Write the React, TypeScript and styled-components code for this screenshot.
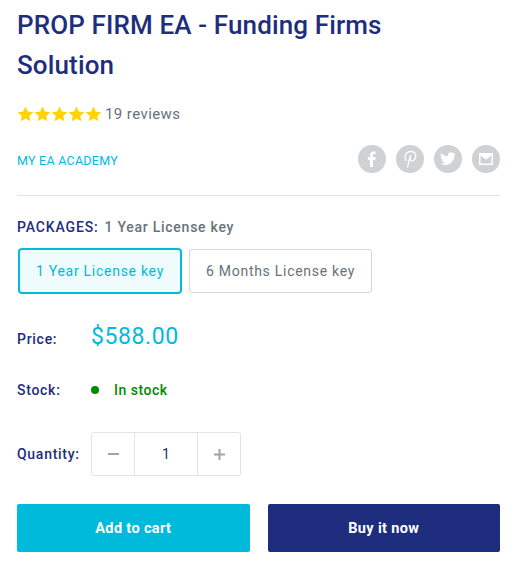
import React from "react";
import styled, { createGlobalStyle } from "styled-components";

const Global = createGlobalStyle`
  html, body { margin: 0; padding: 0; background: #fff; }
  body { font-family: Roboto, "Liberation Sans", sans-serif; overflow: hidden; }
  * { box-sizing: border-box; }
`;

const Page = styled.div`
  width: 522px;
  height: 571px;
  padding: 0 22px 0 17px;
  overflow: hidden;
`;

const Title = styled.h1`
  margin: 0;
  padding-top: 5px;
  max-width: 420px;
  font-size: 26px;
  line-height: 40px;
  font-weight: 500;
  letter-spacing: 0.13px;
  color: #1e2d7d;
`;

const Rating = styled.div`
  display: flex;
  align-items: center;
  gap: 3px;
  height: 24px;
  margin-top: 17px;
`;

const Stars = styled.div`
  display: flex;
  gap: 0;
`;

const Reviews = styled.span`
  font-size: 15px;
  letter-spacing: 0.42px;
  color: #677279;
`;

const VendorRow = styled.div`
  display: flex;
  justify-content: space-between;
  align-items: center;
  height: 28px;
  margin-top: 19px;
`;

const Vendor = styled.span`
  margin-top: 2px;
  font-size: 12.5px;
  letter-spacing: 0.25px;
  color: #00badb;
`;

const Share = styled.div`
  display: flex;
  gap: 10px;
`;

const ShareButton = styled.span`
  width: 28px;
  height: 28px;
  border-radius: 50%;
  background: #ced2d5;
  display: flex;
  align-items: center;
  justify-content: center;
`;

const Divider = styled.hr`
  margin: 22px 0 0;
  border: 0;
  height: 1px;
  background: #e1e3e4;
`;

const PackageLabel = styled.div`
  margin-top: 21px;
  height: 20px;
  display: flex;
  align-items: center;
  gap: 6px;
  font-size: 14px;
  font-weight: 500;
`;

const LabelName = styled.span`
  letter-spacing: 0.85px;
  color: #1e2d7d;
`;

const LabelValue = styled.span`
  letter-spacing: 0.74px;
  color: #677279;
`;

const Options = styled.div`
  display: flex;
  gap: 8px;
  margin-top: 12px;
  padding-left: 2px;
`;

const Option = styled.div<{ $active?: boolean }>`
  height: 44px;
  padding: 0 16px;
  display: flex;
  align-items: center;
  font-size: 14px;
  letter-spacing: 0.72px;
  border-radius: 3px;
  color: ${(p) => (p.$active ? "#00badb" : "#677279")};
  background: ${(p) => (p.$active ? "#f0fbfd" : "#fff")};
  border: 1px solid ${(p) => (p.$active ? "#00badb" : "#d4d6d8")};
  box-shadow: ${(p) => (p.$active ? "0 0 0 1px #00badb" : "none")};
`;

const InfoRow = styled.div<{ $top: number; $height: number }>`
  display: grid;
  grid-template-columns: 74px 1fr;
  align-items: center;
  margin-top: ${(p) => p.$top}px;
  height: ${(p) => p.$height}px;
`;

const InfoLabel = styled.span`
  font-size: 14px;
  font-weight: 500;
  letter-spacing: 0.72px;
  color: #1e2d7d;
`;

const Price = styled.span`
  font-size: 23px;
  letter-spacing: 0.6px;
  color: #00badb;
  position: relative;
  top: -3px;
`;

const StockLine = styled.span`
  display: flex;
  align-items: center;
  gap: 15px;
  font-size: 14px;
  font-weight: 500;
  letter-spacing: 0.5px;
  color: #008a00;
`;

const Dot = styled.i`
  width: 8px;
  height: 8px;
  border-radius: 50%;
  background: #008a00;
`;

const QtyBox = styled.div`
  display: flex;
  width: 150px;
  height: 44px;
  border: 1px solid #e1e3e4;
  border-radius: 3px;
`;

const QtyButton = styled.span`
  width: 42px;
  display: flex;
  align-items: center;
  justify-content: center;
`;

const QtyValue = styled.span`
  flex: 1;
  display: flex;
  align-items: center;
  justify-content: center;
  font-size: 14px;
  color: #1e2d7d;
  border-left: 1px solid #e1e3e4;
  border-right: 1px solid #e1e3e4;
`;

const Actions = styled.div`
  display: flex;
  gap: 18px;
  margin-top: 28px;
`;

const ActionButton = styled.button<{ $color: string }>`
  flex: 1;
  height: 48px;
  border: 0;
  border-radius: 2px;
  background: ${(p) => p.$color};
  color: #fff;
  font: 700 14.5px Roboto, "Liberation Sans", sans-serif;
  letter-spacing: 0.35px;
`;

const Star = () => (
  <svg width="17" height="16" viewBox="0 0 17 16">
    <path
      fill="#ffd400"
      d="M8.5.6l2.3 5 5.5.6-4.1 3.7 1.1 5.4-4.8-2.7-4.8 2.7 1.1-5.4L.7 6.2l5.5-.6z"
    />
  </svg>
);

const App = () => (
  <Page>
    <Global />
    <Title>PROP FIRM EA - Funding Firms Solution</Title>
    <Rating>
      <Stars>
        <Star />
        <Star />
        <Star />
        <Star />
        <Star />
      </Stars>
      <Reviews>19 reviews</Reviews>
    </Rating>
    <VendorRow>
      <Vendor>MY EA ACADEMY</Vendor>
      <Share>
        <ShareButton>
          <svg width="10" height="16" viewBox="0 0 10 16">
            <path fill="#fff" d="M3 16V9H.8V6H3V4.2C3 1.7 4.4.5 6.5.5c1 0 1.8.1 2.1.1v2.6H7.2C6 3.2 5.9 3.8 5.9 4.6V6h2.8l-.4 3H5.9v7z" />
          </svg>
        </ShareButton>
        <ShareButton>
          <svg width="14" height="18" viewBox="0 0 14 18" fill="none">
            <path
              stroke="#fff"
              strokeWidth="1.3"
              strokeLinecap="round"
              d="M3 10.5C1.3 8.5 1.5 2 7.5 1.5c4-.3 5.5 2.5 5.2 5-.4 3.200-2.700 4.700-4.500 4-1.300-.5-1.300-1.700-1-3M7.500 5.500L4.500 17"
            />
          </svg>
        </ShareButton>
        <ShareButton>
          <svg width="16" height="14" viewBox="0 0 24 20">
            <path
              fill="#fff"
              d="M24 2.400c-.9.4-1.800.7-2.800.8 1-.6 1.800-1.600 2.200-2.700-1 .6-2 1-3.100 1.200C19.300.7 18 0 16.600 0c-2.700 0-4.900 2.200-4.900 4.900 0 .4 0 .8.1 1.100C7.700 5.800 4.100 3.900 1.700.9c-.4.700-.7 1.600-.7 2.500 0 1.700.9 3.200 2.200 4.100-.8 0-1.600-.2-2.200-.6v.1c0 2.400 1.700 4.400 3.900 4.800-.4.1-.8.2-1.300.2-.3 0-.6 0-.9-.1.6 2 2.400 3.400 4.600 3.400-1.700 1.300-3.800 2.100-6.100 2.100-.4 0-.8 0-1.200-.1C2.200 18.300 4.800 19 7.500 19c9.100 0 14-7.500 14-14v-.6c1-.7 1.800-1.500 2.500-2z"
            />
          </svg>
        </ShareButton>
        <ShareButton>
          <svg width="14" height="12" viewBox="0 0 14 12" fill="none">
            <rect x="0.75" y="0.75" width="12.5" height="10.5" stroke="#fff" strokeWidth="1.5" />
            <path d="M0 0h14v1.500L7 6.500 0 1.500z" fill="#fff" />
          </svg>
        </ShareButton>
      </Share>
    </VendorRow>
    <Divider />
    <PackageLabel>
      <LabelName>PACKAGES:</LabelName>
      <LabelValue>1 Year License key</LabelValue>
    </PackageLabel>
    <Options>
      <Option $active>1 Year License key</Option>
      <Option>6 Months License key</Option>
    </Options>
    <InfoRow $top={22} $height={48}>
      <InfoLabel>Price:</InfoLabel>
      <Price>$588.00</Price>
    </InfoRow>
    <InfoRow $top={17} $height={20}>
      <InfoLabel>Stock:</InfoLabel>
      <StockLine>
        <Dot />
        In stock
      </StockLine>
    </InfoRow>
    <InfoRow $top={32} $height={44}>
      <InfoLabel>Quantity:</InfoLabel>
      <QtyBox>
        <QtyButton>
          <svg width="11" height="2" viewBox="0 0 11 2">
            <path fill="#9ea6ac" d="M0 0h11v2H0z" />
          </svg>
        </QtyButton>
        <QtyValue>1</QtyValue>
        <QtyButton>
          <svg width="11" height="11" viewBox="0 0 11 11">
            <path fill="#9ea6ac" d="M4.500 0h2v4.500H11v2H6.500V11h-2V6.500H0v-2h4.500z" />
          </svg>
        </QtyButton>
      </QtyBox>
    </InfoRow>
    <Actions>
      <ActionButton $color="#00badb">Add to cart</ActionButton>
      <ActionButton $color="#1e2d7d">Buy it now</ActionButton>
    </Actions>
  </Page>
);

export default App;
